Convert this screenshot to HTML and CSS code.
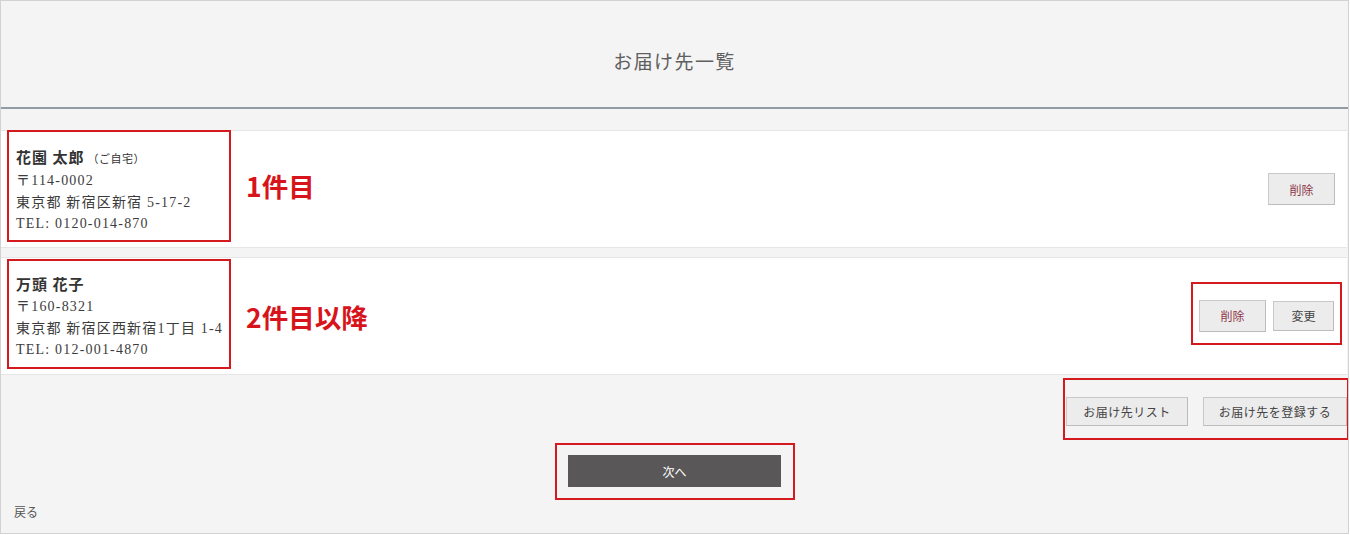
FILE: index.html
```html
<!DOCTYPE html>
<html lang="ja">
<head>
<meta charset="utf-8">
<title>お届け先一覧</title>
<link rel="stylesheet" href="styles.css">
</head>
<body>
<div class="page">
  <header class="header">
    <h1 class="title">お届け先一覧</h1>
  </header>
  <main class="list">
    <section class="card">
      <div class="address mark first">
        <p class="name">花園 太郎<span class="tag">（ご自宅）</span></p>
        <p class="line">〒114-0002</p>
        <p class="line">東京都 新宿区新宿 5-17-2</p>
        <p class="line">TEL: 0120-014-870</p>
      </div>
      <div class="note">1件目</div>
      <div class="ops">
        <button class="btn btn-del">削除</button>
      </div>
    </section>
    <section class="card">
      <div class="address mark second">
        <p class="name">万頭 花子</p>
        <p class="line">〒160-8321</p>
        <p class="line">東京都 新宿区西新宿1丁目 1-4</p>
        <p class="line">TEL: 012-001-4870</p>
      </div>
      <div class="note">2件目以降</div>
      <div class="ops mark ops-marked">
        <button class="btn btn-del">削除</button>
        <button class="btn btn-edit">変更</button>
      </div>
    </section>
    <div class="actions">
      <div class="mark action-group">
        <button class="btn btn-sub btn-list">お届け先リスト</button>
        <button class="btn btn-sub btn-add">お届け先を登録する</button>
      </div>
    </div>
    <div class="next-row">
      <div class="mark next-mark">
        <button class="btn-next">次へ</button>
      </div>
    </div>
    <a class="back" href="#">戻る</a>
  </main>
</div>
</body>
</html>
```

FILE: styles.css
```css
* { box-sizing: border-box; }
html, body { margin: 0; padding: 0; background: #fff; }
body {
  font-family: "Noto Sans CJK JP", "Noto Sans", sans-serif;
  color: #444;
}
p { margin: 0; }

.page {
  width: 1349px;
  height: 534px;
  border: 1px solid #d2d2d2;
  background: #f4f4f4;
  overflow: hidden;
}

.header {
  height: 108px;
  border-bottom: 2px solid #949ca3;
  display: flex;
  align-items: center;
  justify-content: center;
}
.title {
  margin: 0;
  padding-top: 13px;
  font-size: 19px;
  font-weight: 400;
  letter-spacing: 1.4px;
  color: #5f5f5f;
}

.list {
  padding-top: 21px;
  display: flex;
  flex-direction: column;
}

.card {
  height: 118px;
  background: #fff;
  border-top: 1px solid #e6e6e6;
  border-bottom: 1px solid #e6e6e6;
  margin-right: 1px;
  display: flex;
  align-items: center;
  padding: 0 12px 0 6px;
}
.card + .card { margin-top: 9px; }

.mark { border: 2px solid #d41a1f; }

.address {
  width: 224px;
  align-self: flex-start;
  padding-left: 7px;
  font-family: "Liberation Serif", "Noto Sans CJK JP", serif;
  color: #3c3c3c;
}
.address.first { margin-top: -1px; height: 112px; padding-top: 13px; }
.address.second { margin-top: 1px; height: 110px; padding-top: 11px; }

.name {
  font-family: "Noto Sans CJK JP", sans-serif;
  font-size: 15px;
  font-weight: 700;
  letter-spacing: 1px;
  line-height: 24px;
  color: #333;
}
.tag {
  font-size: 11px;
  font-weight: 400;
  letter-spacing: 0.5px;
  margin-left: 3px;
}
.line {
  font-size: 14px;
  line-height: 21.5px;
  letter-spacing: 1.2px;
}

.note {
  margin-left: 15px;
  font-size: 26.5px;
  font-weight: 700;
  color: #d7141b;
  letter-spacing: 0;
}
.card:first-child .note { margin-top: -8px; }

.ops {
  margin-left: auto;
  display: flex;
  gap: 7px;
  align-items: center;
}
.ops-marked {
  margin-right: -7px;
  margin-top: -6px;
  padding: 16px 6px 11px 6px;
}

.btn {
  font-family: "Noto Sans CJK JP", sans-serif;
  font-size: 12px;
  background: #ececec;
  border: 1px solid #c9c9c9;
  border-right-color: #bcbcbc;
  border-bottom-color: #bcbcbc;
  color: #444;
  padding: 0;
  cursor: pointer;
}
.btn-del { width: 67px; height: 32px; color: #8c3548; }
.btn-edit { width: 61px; height: 30px; color: #444; }

.actions {
  display: flex;
  justify-content: flex-end;
  margin-top: 3px;
}
.action-group {
  display: flex;
  gap: 15px;
  padding: 17px 0 12px 1px;
  margin-right: -1px;
}
.btn-sub { height: 29px; color: #444; letter-spacing: 0.5px; }
.btn-list { width: 122px; }
.btn-add { width: 144px; }

.next-row {
  display: flex;
  justify-content: center;
  margin-top: 3px;
}
.next-mark {
  width: 240px;
  padding: 10px 12px 11px 11px;
  margin-left: 1px;
}
.btn-next {
  display: block;
  width: 213px;
  height: 32px;
  border: none;
  background: #595757;
  color: #fff;
  font-family: "Noto Sans CJK JP", sans-serif;
  font-size: 12px;
  cursor: pointer;
}

.back {
  align-self: flex-start;
  margin: 3px 0 0 13px;
  font-size: 12px;
  line-height: 18px;
  color: #555;
  text-decoration: none;
}
```
